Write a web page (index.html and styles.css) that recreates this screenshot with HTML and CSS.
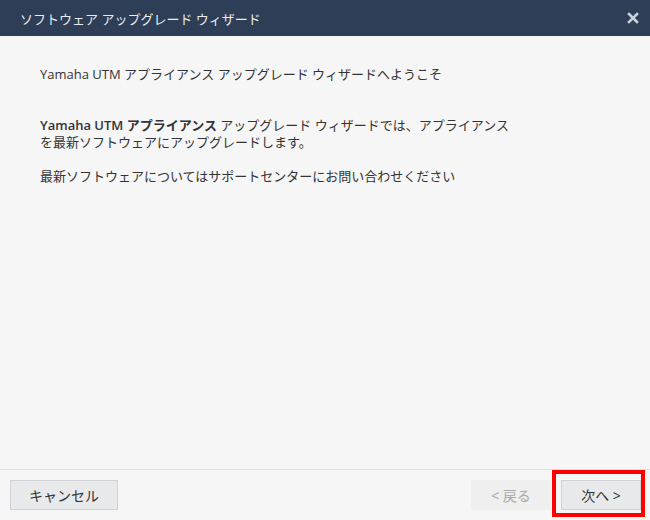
FILE: index.html
```html
<!DOCTYPE html>
<html lang="ja">
<head>
    <meta charset="UTF-8">
    <title>ソフトウェア アップグレード ウィザード</title>
    <link rel="stylesheet" href="styles.css">
</head>
<body>
    <div class="dialog">
        <div class="titlebar">
            <span class="title">ソフトウェア アップグレード ウィザード</span>
            <svg class="close" width="12" height="12" viewBox="0 0 12 12">
                <path d="M2 2 L10 10 M10 2 L2 10" stroke="#c9d1dc" stroke-width="2.6" stroke-linecap="square"/>
            </svg>
        </div>
        <div class="content">
            <p class="msg">
                Yamaha UTM アプライアンス アップグレード ウィザードへようこそ<br><br><br>
                <b>Yamaha UTM アプライアンス</b> アップグレード ウィザードでは、アプライアンスを最新ソフトウェアにアップグレードします。<br><br>
                最新ソフトウェアについてはサポートセンターにお問い合わせください
            </p>
        </div>
        <div class="footer">
            <button class="btn">キャンセル</button>
            <div class="nav">
                <button class="btn btn-back" disabled>&lt; 戻る</button>
                <button class="btn btn-next">次へ &gt;</button>
                <div class="highlight"></div>
            </div>
        </div>
    </div>
</body>
</html>
```

FILE: styles.css
```css
body {
    margin: 0;
    background-color: #f6f6f6;
    font-family: "Open Sans", "Noto Sans CJK JP", sans-serif;
}

.dialog {
    width: 650px;
    height: 520px;
    display: flex;
    flex-direction: column;
    background-color: #f6f6f6;
}

.titlebar {
    height: 36px;
    background-color: #2d3e56;
    display: flex;
    align-items: center;
    justify-content: space-between;
    padding: 0 11px 0 20px;
}

.title {
    color: #e9edf2;
    font-size: 13px;
}

.close {
    display: block;
}

.content {
    flex: 1;
    padding: 0 40px;
}

.msg {
    width: 478px;
    margin: 30px 0 0 0;
    font-size: 13px;
    line-height: 17px;
    color: #333;
}

.msg b {
    font-weight: 600;
}

.footer {
    height: 50px;
    border-top: 1px solid #dfdfdf;
    display: flex;
    align-items: center;
    justify-content: space-between;
    padding: 0 9px 0 10px;
}

.nav {
    position: relative;
    display: flex;
    gap: 10px;
}

.btn {
    height: 30px;
    width: 108px;
    font-family: "Open Sans", "Noto Sans CJK JP", sans-serif;
    font-size: 14px;
    color: #333;
    background-color: #e8e9eb;
    border: 1px solid #cfd1d4;
    border-radius: 0;
    padding: 0;
}

.btn-back,
.btn-next {
    width: 80px;
}

.btn-back {
    background-color: #efefef;
    border-color: #efefef;
    color: #a8a8a8;
}

.highlight {
    position: absolute;
    right: -4px;
    top: -10px;
    width: 85px;
    height: 39px;
    border: 4px solid #ff0000;
}
```
